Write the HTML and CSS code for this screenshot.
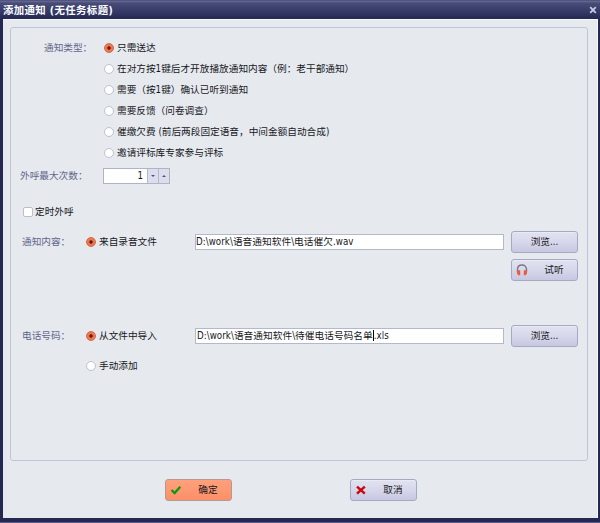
FILE: index.html
```html
<!DOCTYPE html>
<html lang="zh-CN">
<head>
<meta charset="utf-8">
<title>添加通知</title>
<link rel="stylesheet" href="styles.css">
</head>
<body>
<div class="window">
  <header class="titlebar">
    <h1 class="title">添加通知 (无任务标题)</h1>
    <svg class="close" viewBox="0 0 8 8"><path d="M1.2 1.2 6.8 6.8M6.8 1.2 1.2 6.8"/></svg>
  </header>
  <main class="client">
    <section class="panel">
      <div class="row type-row">
        <span class="label">通知类型：</span>
        <div class="options">
          <label class="option"><i class="radio on"></i>只需送达</label>
          <label class="option">
            <i class="radio"></i>在对方按1键后才开放播放通知内容（例：老干部通知）</label>
          <label class="option"><i class="radio"></i>需要（按1键）确认已听到通知</label>
          <label class="option"><i class="radio"></i>需要反馈（问卷调查）</label>
          <label class="option"><i class="radio"></i>催缴欠费 (前后两段固定语音，中间金额自动合成)</label>
          <label class="option"><i class="radio"></i>邀请评标库专家参与评标</label>
        </div>
      </div>
      <div class="row count-row">
        <span class="label">外呼最大次数：</span>
        <div class="spinner">
          <span class="value">1</span>
          <span class="step"><i class="arrow down"></i></span>
          <span class="step"><i class="arrow up"></i></span>
        </div>
      </div>
      <label class="row check-row"><i class="checkbox"></i>定时外呼</label>
      <div class="row source-row content-row">
        <span class="label">通知内容：</span>
        <label class="option"><i class="radio on"></i>来自录音文件</label>
        <div class="field">D:\work\语音通知软件\电话催欠.wav</div>
        <div class="button">浏览...</div>
      </div>
      <div class="row listen-row">
        <div class="button with-icon">
          <svg class="icon phones" viewBox="0 0 12 12">
            <path class="band" d="M1.500 8V5.500C1.500 2.600 3.400 1 6 1s4.500 1.600 4.500 4.500V8"/>
            <path class="cup" d="M1.500 6.200h2.700v5H2.300L1 9.500V7zM10.500 6.200H7.800v5h1.900L11 9.500V7z"/>
          </svg>
          <span class="caption">试听</span>
        </div>
      </div>
      <div class="row source-row phone-row">
        <span class="label">电话号码：</span>
        <label class="option"><i class="radio on"></i>从文件中导入</label>
        <div class="field focused">D:\work\语音通知软件\待催电话号码名单<i class="caret"></i>.xls</div>
        <div class="button">浏览...</div>
      </div>
      <div class="row manual-row">
        <label class="option"><i class="radio"></i>手动添加</label>
      </div>
    </section>
    <footer class="actions">
      <div class="button with-icon primary">
        <svg class="icon" viewBox="0 0 12 12"><path class="tick" d="M1.500 6 4.600 9 10.300 2.800"/></svg>
        <span class="caption">确定</span>
      </div>
      <div class="button with-icon">
        <svg class="icon" viewBox="0 0 12 12"><path class="cross" d="M2 2.600 9.800 9.600M9.800 2.600 2 9.600"/></svg>
        <span class="caption">取消</span>
      </div>
    </footer>
  </main>
</div>
</body>
</html>
```
FILE: styles.css
```css
* {
  box-sizing: border-box;
}

body {
  margin: 0;
  font: 9.67px/14px "DejaVu Sans Condensed", "DejaVu Sans", "Noto Sans CJK SC", sans-serif;
  font-stretch: condensed;
  color: #17171c;
  white-space: nowrap;
}

.window {
  display: flex;
  flex-direction: column;
  width: 600px;
  height: 523px;
  padding: 0 2px 4px 3px;
  background: #242853;
  border-bottom: 1px solid #5b5f88;
}

.titlebar {
  display: flex;
  align-items: center;
  justify-content: space-between;
  flex: none;
  height: 19px;
  margin: 0 -2px 0 -3px;
  padding: 0 3px 0 3px;
  background: linear-gradient(#3a3d68 0, #6a6e96 1px, #484c78 3px, #3b3f6c 9px, #262b56 18px);
}

.title {
  margin: 0;
  font-size: 10.4px;
  font-weight: bold;
  letter-spacing: 0.4px;
  color: #fff;
}

.close {
  width: 8px;
  height: 8px;
  fill: none;
  stroke: #c8cbe2;
  stroke-width: 1.8;
}

.client {
  flex: 1;
  padding: 7px 9px 0 7px;
  background: #e6eaef;
  border-top: 1px solid #f8f9fc;
  border-right: 1px solid #f8f9fc;
}

.panel {
  height: 434px;
  padding-top: 9px;
  border: 1px solid #bfc5d8;
  border-radius: 3px;
}

.row {
  display: flex;
  align-items: center;
}

.label {
  flex: none;
  color: #62668a;
}

.type-row {
  align-items: flex-start;
  padding-left: 33px;
}

.type-row .label {
  width: 60px;
  line-height: 21px;
}

.type-row .option {
  height: 21.1px;
}

.option {
  display: flex;
  align-items: center;
  gap: 3px;
}

.radio {
  flex: none;
  width: 10px;
  height: 10px;
  border: 1px solid #bcc1d8;
  border-radius: 50%;
  background: #fff;
}

.radio.on {
  border-color: #d0694c;
  background: radial-gradient(circle, #5a1c14 0 1.2px, #f0764c 2.2px);
}

.count-row {
  height: 17px;
  margin-top: 4px;
  padding-left: 9px;
}

.count-row .label {
  width: 83px;
}

.spinner {
  display: flex;
  width: 67px;
  height: 16px;
  border: 1px solid #aeb3c6;
  background: #fff;
}

.value {
  flex: 1;
  padding-right: 4px;
  text-align: right;
}

.step {
  display: flex;
  align-items: center;
  justify-content: center;
  width: 11px;
  border-left: 1px solid #b4b7d2;
  background: #dcdeee;
}

.arrow {
  border: 2px solid transparent;
}

.arrow.down {
  border-top-color: #50557a;
  border-bottom: 0;
}

.arrow.up {
  border-bottom-color: #50557a;
  border-top: 0;
}

.check-row {
  gap: 2px;
  height: 14px;
  margin-top: 20px;
  padding-left: 12px;
}

.checkbox {
  width: 10px;
  height: 10px;
  border: 1px solid #b9bed2;
  border-radius: 2px;
  background: #fff;
}

.source-row {
  height: 22px;
  padding-left: 11px;
}

.source-row .label {
  width: 64px;
}

.source-row .option {
  width: 109px;
}

.content-row {
  margin-top: 12px;
}

.phone-row {
  margin-top: 44px;
}

.field {
  width: 309px;
  height: 16px;
  margin-right: 7px;
  border: 1px solid #b3b8cc;
  background: #fff;
  line-height: 13px;
  letter-spacing: 0.05px;
}

.focused {
  padding-left: 1px;
}

.caret {
  display: inline-block;
  width: 1px;
  height: 11px;
  vertical-align: -2px;
  background: #000;
}

.button {
  display: flex;
  align-items: center;
  justify-content: center;
  width: 67px;
  height: 22px;
  border: 1px solid #a5aac4;
  border-radius: 3px;
  background: linear-gradient(#e2e3f0, #d6d7ea 50%, #c7c8e1);
  box-shadow: inset 0 1px #e9eaf5;
}

.with-icon {
  justify-content: flex-start;
  padding-left: 4px;
}

.caption {
  flex: 1;
  padding-left: 3px;
  text-align: center;
}

.icon {
  width: 12px;
  height: 12px;
  fill: none;
}

.band {
  stroke: #777786;
  stroke-width: 1.4;
}

.cup {
  fill: #ee5a3c;
}

.tick {
  stroke: #0b9a0b;
  stroke-width: 2.3;
}

.cross {
  stroke: #c90812;
  stroke-width: 2.5;
}

.listen-row {
  margin-top: 6px;
  padding-left: 500px;
}

.manual-row {
  height: 14px;
  margin-top: 12px;
  padding-left: 75px;
}

.actions {
  display: flex;
  gap: 118px;
  margin-top: 18px;
  padding-left: 155px;
}

.primary {
  border-color: #b59a94;
  background: linear-gradient(#ffa07c, #fb9068);
  box-shadow: none;
}
```
